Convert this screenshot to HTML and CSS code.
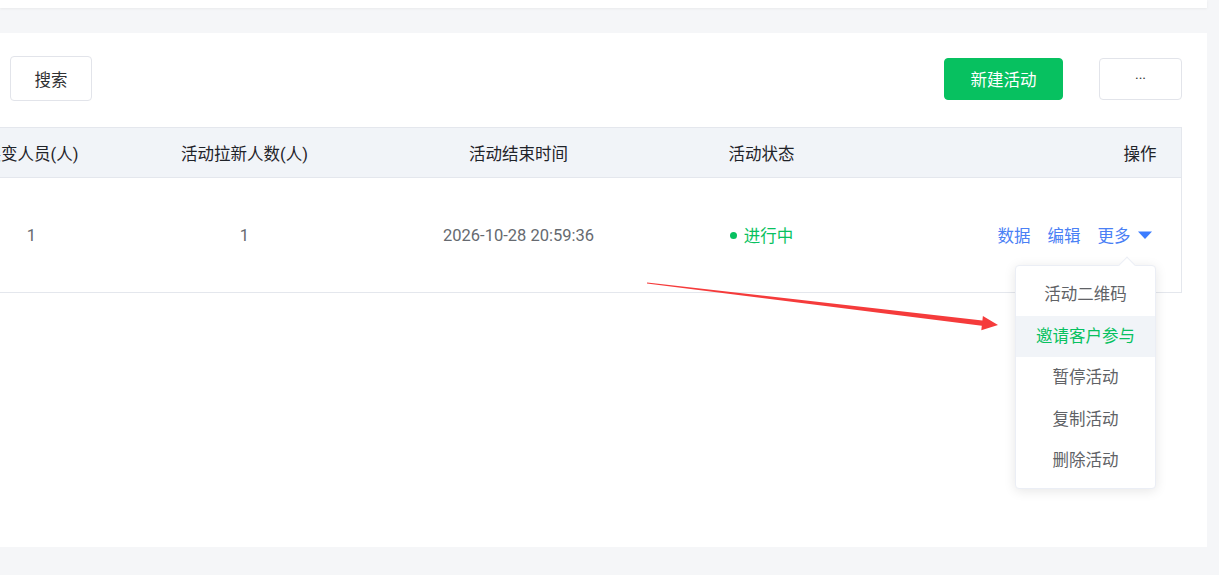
FILE: index.html
```html
<!DOCTYPE html>
<html lang="zh-CN">
<head>
<meta charset="utf-8">
<title>活动列表</title>
<link rel="stylesheet" href="styles.css">
</head>
<body>
<div class="top-card"></div>
<section class="card">
  <div class="toolbar">
    <button class="btn btn-default btn-search">搜索</button>
    <div class="spacer"></div>
    <button class="btn btn-primary">新建活动</button>
    <button class="btn btn-default btn-more">···</button>
  </div>
  <div class="table-wrap">
    <table class="table">
      <colgroup>
        <col class="c1"><col class="c2"><col class="c3"><col class="c4"><col class="c5">
      </colgroup>
      <thead>
        <tr>
          <th>裂变人员(人)</th>
          <th>活动拉新人数(人)</th>
          <th>活动结束时间</th>
          <th>活动状态</th>
          <th class="th-ops">操作</th>
        </tr>
      </thead>
      <tbody>
        <tr>
          <td>1</td>
          <td>1</td>
          <td>2026-10-28 20:59:36</td>
          <td><span class="status"><span class="dot"></span>进行中</span></td>
          <td class="td-ops">
            <span class="ops">
              <a class="link">数据</a>
              <a class="link">编辑</a>
              <a class="link more">更多<svg class="caret" width="14" height="8" viewBox="0 0 14 8"><path d="M0 0.5 L14 0.5 L7 8 Z" fill="#3b7cff"/></svg></a>
            </span>
          </td>
        </tr>
      </tbody>
    </table>
  </div>
  <div class="dropdown">
    <span class="dropdown-arrow"></span>
    <ul class="menu">
      <li>活动二维码</li>
      <li class="active">邀请客户参与</li>
      <li>暂停活动</li>
      <li>复制活动</li>
      <li>删除活动</li>
    </ul>
  </div>
</section>
<svg class="annot" width="1219" height="575" viewBox="0 0 1219 575">
  <polygon points="647.1,282.4 982.4,320.4 982.9,316.1 998,325 981.3,330.2 981.8,325.8 646.9,283.6" fill="#f53b3b"/>
</svg>
</body>
</html>
```
FILE: styles.css
```css
* { box-sizing: border-box; }
html, body { margin: 0; padding: 0; }
body {
  position: relative;
  width: 1219px;
  height: 575px;
  overflow: hidden;
  background: #f5f6f8;
  font-family: "Roboto", "Noto Sans CJK SC", sans-serif;
  font-size: 16.5px;
  color: #303133;
}
.top-card {
  width: 1207px;
  height: 8px;
  background: #fff;
  box-shadow: 0 1px 3px rgba(0, 0, 0, 0.05);
}
.card {
  position: relative;
  width: 1207px;
  height: 514px;
  margin-top: 25px;
  background: #fff;
  padding: 23px 25px 0 10px;
}
.toolbar {
  display: flex;
  align-items: center;
  height: 45px;
}
.spacer { flex: 1; }
.btn {
  font-family: inherit;
  font-size: 16.5px;
  border-radius: 4px;
  padding: 0;
  cursor: pointer;
}
.btn-default {
  background: #fff;
  border: 1px solid #e2e4ea;
  color: #303133;
}
.btn-search { width: 82px; height: 45px; }
.btn-primary {
  width: 119px;
  height: 42px;
  background: #07c160;
  border: 1px solid #07c160;
  color: #fff;
}
.btn-more {
  width: 83px;
  height: 42px;
  margin-left: 36px;
  font-size: 14px;
  color: #333;
}
.table-wrap {
  margin: 26px 0 0 -10px;
  overflow: hidden;
}
.table {
  margin-left: -75px;
  width: 1256px;
  table-layout: fixed;
  border-collapse: collapse;
}
.c1 { width: 213px; }
.c2 { width: 213px; }
.c3 { width: 335px; }
.c4 { width: 151px; }
.c5 { width: 344px; }
.table th {
  height: 50px;
  background: #f1f4f8;
  border-top: 1px solid #e4e7ed;
  border-bottom: 1px solid #e4e7ed;
  font-weight: 400;
  color: #1f2329;
  text-align: center;
  padding: 0;
  white-space: nowrap;
}
.table th:last-child,
.table td:last-child { border-right: 1px solid #e4e7ed; }
.table th.th-ops { text-align: right; padding-right: 24px; }
.table td {
  height: 115px;
  border-bottom: 1px solid #e4e7ed;
  text-align: center;
  color: #666a70;
  padding: 0;
  white-space: nowrap;
}
.table td.td-ops { text-align: right; padding-right: 29px; }
.status {
  display: inline-flex;
  align-items: center;
  color: #07c160;
}
.dot {
  width: 7px;
  height: 7px;
  border-radius: 50%;
  background: #07c160;
  margin-right: 7px;
}
.ops {
  display: inline-flex;
  align-items: center;
  gap: 17px;
}
.link {
  color: #4a80f5;
  cursor: pointer;
  display: inline-flex;
  align-items: center;
}
.caret { margin-left: 7px; }
.dropdown {
  position: absolute;
  left: 1015px;
  top: 232px;
  width: 141px;
  background: #fff;
  border: 1px solid #ebeef5;
  border-radius: 4px;
  box-shadow: 0 2px 12px rgba(0, 0, 0, 0.1);
}
.dropdown-arrow {
  position: absolute;
  top: -7px;
  left: 105px;
  width: 12px;
  height: 12px;
  background: #fff;
  border-top: 1px solid #ebeef5;
  border-left: 1px solid #ebeef5;
  transform: rotate(45deg);
}
.menu {
  position: relative;
  list-style: none;
  margin: 0;
  padding: 8px 0 6px;
}
.menu li {
  height: 41.6px;
  line-height: 41.6px;
  text-align: center;
  color: #606266;
  white-space: nowrap;
}
.menu li.active {
  background: #f1f4f8;
  color: #07c160;
}
.annot {
  position: absolute;
  left: 0;
  top: 0;
  pointer-events: none;
}
```
